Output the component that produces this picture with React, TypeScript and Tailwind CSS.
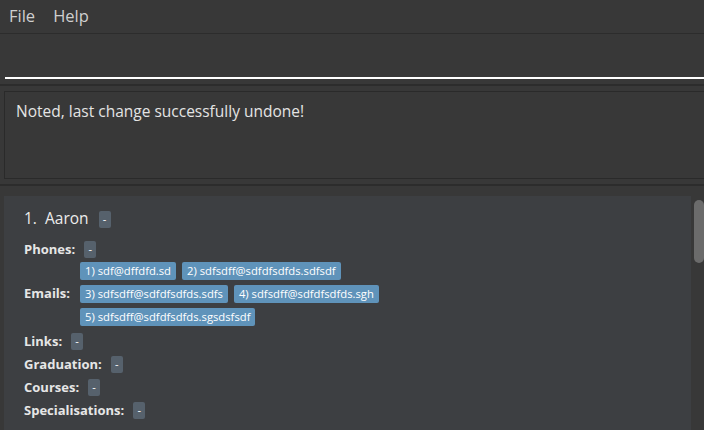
// Address book window: menu, command box, result display and person list.
const emails = [
  "1) sdf@dffdfd.sd",
  "2) sdfsdff@sdfdfsdfds.sdfsdf",
  "3) sdfsdff@sdfdfsdfds.sdfs",
  "4) sdfsdff@sdfdfsdfds.sgh",
  "5) sdfsdff@sdfdfsdfds.sgsdsfsdf",
];

function Dash() {
  return (
    <span className="inline-flex h-[17px] w-[12px] items-center justify-center rounded-[2px] bg-[#56616c] text-[11px] text-white">
      -
    </span>
  );
}

function Field({ label }: { label: string }) {
  return (
    <div className="flex h-[23px] items-center gap-[9px]">
      <span className="text-[13px] font-bold text-[#e6e6e6]">{label}</span>
      <Dash />
    </div>
  );
}

export default function App() {
  return (
    <div
      className="flex h-[430px] w-[704px] flex-col overflow-hidden bg-[#383838]"
      style={{ fontFamily: '"Open Sans", "Noto Sans", sans-serif' }}
    >
      <div className="flex h-[34px] shrink-0 items-center gap-[18px] border-b border-[#2c2c2c] pl-[9px] text-[16.5px] text-[#cfcfcf]">
        <span>File</span>
        <span>Help</span>
      </div>

      <div className="h-[43px] shrink-0" />
      <div className="ml-[5px] h-[2px] shrink-0 bg-white" />
      <div className="mt-[5px] h-[2px] shrink-0 bg-[#2c2c2c]" />

      <div className="ml-[4px] mt-[5px] h-[88px] shrink-0 border border-r-0 border-[#2a2a2a] px-[11px] pt-[8px] text-[15.5px] text-[#e4e4e4]">
        Noted, last change successfully undone!
      </div>
      <div className="mt-[5px] h-[2px] shrink-0 bg-[#2c2c2c]" />

      <div className="mt-[10px] flex min-h-0 flex-1">
        <div className="ml-[4px] flex w-[687px] flex-col bg-[#3d3f42] pl-[20px] pt-[11px]">
          <div className="flex h-[24px] items-center gap-[10px]">
            <span className="text-[15.5px] text-[#ececec]">
              1.&nbsp;&nbsp;Aaron
            </span>
            <Dash />
          </div>
          <div className="mt-[7px]">
            <Field label="Phones:" />
          </div>
          <div className="flex items-center gap-[10px]">
            <span className="text-[13px] font-bold text-[#e6e6e6]">
              Emails:
            </span>
            <div className="flex w-[330px] flex-wrap gap-x-[6px] gap-y-[5px] pt-[1px]">
              {emails.map((e) => (
                <span
                  key={e}
                  className="rounded-[2px] bg-[#5f93ba] px-[5px] text-[11.25px] leading-[18px] text-white"
                >
                  {e}
                </span>
              ))}
            </div>
          </div>
          <div className="mt-[4px]">
            <Field label="Links:" />
            <Field label="Graduation:" />
            <Field label="Courses:" />
            <Field label="Specialisations:" />
          </div>
        </div>
        <div className="ml-[3px] mt-[4px] h-[63px] w-[10px] rounded-[5px] bg-[#6b6b6b]" />
      </div>
    </div>
  );
}
